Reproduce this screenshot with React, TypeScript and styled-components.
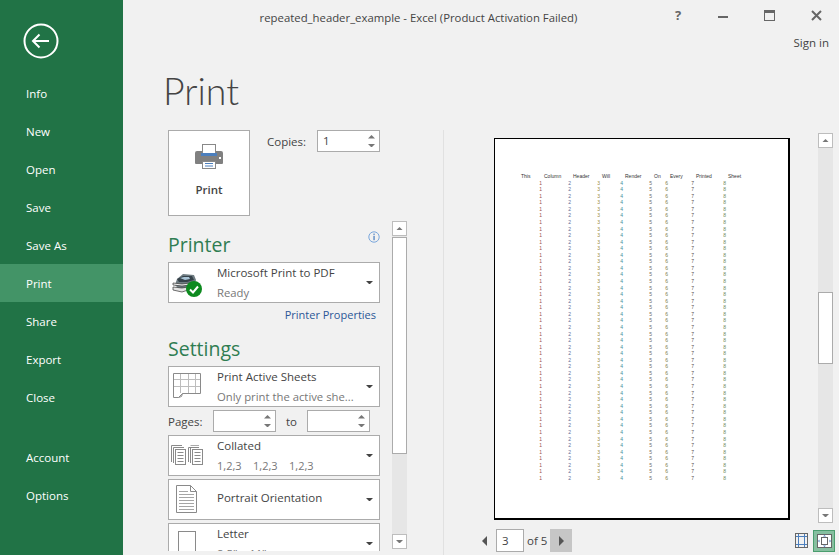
import React from "react";
import styled, { createGlobalStyle } from "styled-components";

const Global = createGlobalStyle`
  html, body {
    margin: 0;
    padding: 0;
    height: 100%;
    overflow: hidden;
    background: #f1f1f1;
  }
  * { box-sizing: border-box; }
`;

const green = "#217346";
const line = "#ababab";

const Window = styled.div`
  width: 839px;
  height: 555px;
  display: flex;
  overflow: hidden;
  background: #f1f1f1;
  color: #444;
  font-family: "Open Sans", "Liberation Sans", sans-serif;
  font-size: 11.5px;
`;

const Sidebar = styled.nav`
  width: 123px;
  flex: none;
  background: ${green};
  color: #fff;
  display: flex;
  flex-direction: column;
`;

const BackButton = styled.div`
  padding: 23px 0 0 23px;
  height: 74px;
`;

const NavItem = styled.div<{ $active?: boolean }>`
  height: 38px;
  line-height: 40px;
  padding-left: 26px;
  background: ${(p) => (p.$active ? "#439467" : "transparent")};
`;

const NavGap = styled.div`
  height: 22px;
`;

const Main = styled.main`
  flex: 1;
  min-width: 0;
  display: flex;
  flex-direction: column;
`;

const TitleBar = styled.header`
  height: 55px;
  flex: none;
  display: flex;
  margin-left: -123px;
  position: relative;
`;

const WindowTitle = styled.div`
  width: 100%;
  text-align: center;
  padding: 9px 2px 0 0;
  line-height: 17px;
  font-size: 11.35px;
`;

const WindowControls = styled.div`
  position: absolute;
  top: 7px;
  right: 0;
  display: flex;
  flex-direction: column;
  align-items: flex-end;
`;

const ControlRow = styled.div`
  display: flex;
  gap: 36px;
  padding-right: 17px;
  height: 16px;
  align-items: center;
`;

const SignIn = styled.div`
  margin-top: 12px;
  padding-right: 10px;
  line-height: 16px;
`;

const HelpMark = styled.span`
  font-weight: 700;
  font-size: 13px;
  color: #666;
  width: 7px;
  line-height: 14px;
`;

const PageTitle = styled.h1`
  margin: 0;
  padding-left: 40px;
  height: 75px;
  font-family: "Lato", sans-serif;
  font-size: 37.5px;
  font-weight: 300;
  line-height: 71px;
  color: #444;
`;

const Body = styled.div`
  flex: 1;
  min-height: 0;
  display: flex;
`;

const Controls = styled.section`
  width: 321px;
  flex: none;
  padding-left: 45px;
  border-right: 1px solid #e1e1e1;
  display: flex;
  gap: 12px;
`;

const ControlColumn = styled.div`
  width: 212px;
  flex: none;
  height: 421px;
  overflow: hidden;
`;

const TopRow = styled.div`
  display: flex;
`;

const PrintButton = styled.button`
  width: 82px;
  height: 86px;
  padding: 13px 0 0;
  background: #fff;
  border: 1px solid ${line};
  font: inherit;
  font-weight: 600;
  line-height: 16px;
  color: #444;
  display: flex;
  flex-direction: column;
  align-items: center;
  gap: 13px;
`;

const CopiesRow = styled.div`
  display: flex;
  align-items: flex-start;
  margin-left: 17px;
`;

const CopiesLabel = styled.label`
  width: 50px;
  line-height: 23px;
`;

const SpinBox = styled.div`
  width: 63px;
  height: 22px;
  background: #fff;
  border: 1px solid ${line};
  display: flex;
  align-items: center;
  justify-content: space-between;
  padding: 0 4px 0 5px;
  line-height: 20px;
`;

const SpinArrows = styled.div`
  display: flex;
  flex-direction: column;
  gap: 5px;
`;

const SectionHead = styled.div<{ $top: number }>`
  display: flex;
  justify-content: space-between;
  align-items: flex-start;
  margin-top: ${(p) => p.$top}px;
`;

const SectionTitle = styled.h2`
  margin: 0;
  font-size: 19.5px;
  font-weight: 400;
  line-height: 28px;
  color: #2f7d52;
`;

const Dropdown = styled.div<{ $top?: number }>`
  height: 41px;
  margin-top: ${(p) => p.$top ?? 0}px;
  background: #fff;
  border: 1px solid ${line};
  display: flex;
  align-items: center;
  flex: none;
`;

const DropIcon = styled.div<{ $left: number; $top: number }>`
  width: 48px;
  flex: none;
  align-self: stretch;
  padding: ${(p) => p.$top}px 0 0 ${(p) => p.$left}px;
`;

const DropText = styled.div`
  flex: 1;
  min-width: 0;
  line-height: 20px;
  white-space: nowrap;
`;

const SingleLine = styled(DropText)`
  padding-bottom: 3px;
`;

const DropSub = styled.div`
  color: #777;
  font-size: 11.3px;
`;

const CollatedSub = styled.div`
  color: #777;
  font-size: 11px;
  display: flex;
  & span {
    width: 36px;
  }
`;

const DropCaret = styled.div`
  width: 13px;
  flex: none;
  display: flex;
  align-items: center;
`;

const PropertiesLink = styled.a`
  display: block;
  text-align: right;
  padding-right: 4px;
  height: 24px;
  line-height: 24px;
  font-size: 11px;
  color: #2b5797;
`;

const PagesRow = styled.div`
  display: flex;
  align-items: center;
  height: 22px;
  margin: 3px 0;
`;

const PagesLabel = styled.span`
  width: 45px;
`;

const ToLabel = styled.span`
  width: 31px;
  text-align: center;
`;

const Scrollbar = styled.div<{ $height: number; $top: number }>`
  width: 15px;
  height: ${(p) => p.$height}px;
  margin-top: ${(p) => p.$top}px;
  background: #e6e6e6;
  flex: none;
  display: flex;
  flex-direction: column;
`;

const ScrollButton = styled.div`
  height: 15px;
  flex: none;
  background: #fff;
  border: 1px solid #bdbdbd;
  display: flex;
  align-items: center;
  justify-content: center;
`;

const ScrollThumb = styled.div<{ $height: number; $before: number }>`
  height: ${(p) => p.$height}px;
  margin-top: ${(p) => p.$before}px;
  background: #fff;
  border: 1px solid ${line};
  flex: none;
`;

const ScrollFill = styled.div`
  flex: 1;
`;

const Preview = styled.section`
  flex: 1;
  min-width: 0;
  display: flex;
  flex-direction: column;
`;

const PreviewTop = styled.div`
  display: flex;
  padding-left: 50px;
  padding-top: 8px;
`;

const Sheet = styled.div`
  width: 296px;
  height: 382px;
  flex: none;
  background: #fff;
  border: 1px solid #000;
  border-right-width: 2px;
  border-bottom-width: 2px;
  padding: 34px 0 0 26px;
  font-family: "Liberation Sans", sans-serif;
  font-size: 5px;
  line-height: 6.57px;
`;

const SheetTable = styled.div`
  display: grid;
  grid-template-columns: 23px 29px 29px 23px 29px 16px 26px 32px 20px;
  grid-auto-rows: 6.57px;
`;

const SheetHead = styled.div`
  color: #333;
  height: 8px;
`;

const SheetCell = styled.div<{ $color: string }>`
  text-align: right;
  padding-right: 2px;
  color: ${(p) => p.$color};
`;

const PreviewScroll = styled.div`
  margin-left: 28px;
  margin-top: -5px;
`;

const PagerBar = styled.div`
  display: flex;
  align-items: center;
  height: 23px;
  margin-top: 6px;
  padding-left: 38px;
`;

const PagerArrow = styled.div<{ $active?: boolean }>`
  width: 22px;
  height: 23px;
  background: ${(p) => (p.$active ? "#c6c6c6" : "transparent")};
  display: flex;
  align-items: center;
  justify-content: center;
`;

const PagerPrev = styled(PagerArrow)`
  width: 14px;
  justify-content: flex-start;
`;

const PageInput = styled.div`
  width: 28px;
  height: 23px;
  background: #fff;
  border: 1px solid ${line};
  padding-left: 5px;
  line-height: 21px;
`;

const PagerText = styled.span`
  margin: 0 3px;
  white-space: nowrap;
`;

const ViewButtons = styled.div`
  margin-left: auto;
  margin-right: 4px;
  display: flex;
  align-items: center;
  gap: 1px;
`;

const ViewToggle = styled.div<{ $active?: boolean }>`
  width: ${(p) => (p.$active ? 22 : 21)}px;
  height: 22px;
  display: flex;
  align-items: center;
  justify-content: center;
  background: ${(p) => (p.$active ? "#86bf9f" : "transparent")};
  border: 1px solid ${(p) => (p.$active ? "#4a9d6e" : "transparent")};
`;

const Icon = styled.svg`
  display: block;
`;

const Tri = ({ dir, size = 3.5, color = "#777" }: { dir: "up" | "down" | "left" | "right"; size?: number; color?: string }) => {
  const s = size * 2;
  const pts = {
    up: `0,${size} ${size},0 ${s},${size}`,
    down: `0,0 ${s},0 ${size},${size}`,
    left: `${size},0 ${size},${s} 0,${size}`,
    right: `0,0 ${size},${size} 0,${s}`,
  }[dir];
  const horizontal = dir === "up" || dir === "down";
  return (
    <Icon width={horizontal ? s : size} height={horizontal ? size : s}>
      <polygon points={pts} fill={color} />
    </Icon>
  );
};

const Spinners = () => (
  <SpinArrows>
    <Tri dir="up" />
    <Tri dir="down" />
  </SpinArrows>
);

const Caret = () => (
  <DropCaret>
    <Tri dir="down" color="#444" />
  </DropCaret>
);

const BackIcon = () => (
  <Icon width="36" height="36" viewBox="0 0 36 36" fill="none" stroke="#fff" strokeWidth="2">
    <circle cx="18" cy="18" r="16.5" />
    <path d="M26 18H10.500M16.500 11.500 10 18l6.500 6.500" />
  </Icon>
);

const PrinterIcon = () => (
  <Icon width="28" height="25" viewBox="0 0 28 25">
    <rect x="7.5" y="0.5" width="13" height="9" fill="#fff" stroke="#888" />
    <path d="M2 7h5v2h14V7h5a2 2 0 0 1 2 2v10a1 1 0 0 1-1 1H1a1 1 0 0 1-1-1V9a2 2 0 0 1 2-2z" fill="#808080" />
    <rect x="6" y="9" width="16" height="3" fill="#4c7fbd" />
    <rect x="7.5" y="17.5" width="13" height="7" fill="#fff" stroke="#888" />
    <path d="M10 19.500h8M10 22h8" stroke="#4c7fbd" />
    <rect x="24" y="13" width="2" height="2" fill="#fff" />
  </Icon>
);

const InfoIcon = () => (
  <Icon width="12" height="12" viewBox="0 0 12 12">
    <circle cx="6" cy="6" r="5.2" fill="none" stroke="#7aa7dc" />
    <rect x="5.4" y="2.6" width="1.3" height="1.3" fill="#4f82c0" />
    <rect x="5.4" y="4.8" width="1.3" height="4.4" fill="#4f82c0" />
  </Icon>
);

const PrinterStatusIcon = () => (
  <Icon width="30" height="23" viewBox="0 0 30 23">
    <path d="M5 5 11 0l11 1 2 5-3 9H7L3 11z" fill="#6f7c82" />
    <path d="M5 5l6-3h9l2 4-7 2H7z" fill="#36424a" />
    <path d="M8 4l4-1h5l1 2-5 1z" fill="#a9c4d6" />
    <path d="M1 9l9 1 8-1v2l-8 1-9-1z" fill="#f0f0f0" stroke="#333" strokeWidth=".7" />
    <path d="M1 13l9 1 6-1v3l-6 2-9-2z" fill="#e4e4e4" stroke="#333" strokeWidth=".7" />
    <circle cx="22" cy="15" r="8" fill="#0d8a1f" />
    <path d="M18 15.500l3 3 5-6" fill="none" stroke="#fff" strokeWidth="2" />
  </Icon>
);

const SheetsIcon = () => (
  <Icon width="28" height="25" viewBox="0 0 28 25" fill="none">
    <path d="M7.500 1v19M15.500 1v19M22.500 1v19M1 6.500h26M1 13.500h26" stroke="#bdbdbd" />
    <path d="M.5.500h27v20h-18l-4 4h-5z" stroke="#8a8a8a" />
    <path d="M9.500 20.500l-1 3-3 1" stroke="#8a8a8a" />
  </Icon>
);

const CollatedIcon = () => (
  <Icon width="32" height="20" viewBox="0 0 32 20" fill="none" stroke="#8a8a8a">
    <path d="M.5 17V.5H11M2.500 18V2.500H13" />
    <rect x="4.500" y="4.500" width="10" height="15" fill="#fff" />
    <path d="M6.500 7.500h6M6.500 10.500h6M6.500 13.500h6M6.500 16.500h6" />
    <path d="M17.500 17V2.500H28M19.500 18V2.500" />
    <path d="M19.500.5H28" stroke="#aaa" />
    <rect x="21.500" y="4.500" width="10" height="15" fill="#fff" />
    <path d="M23.500 7.500h6M23.500 10.500h6M23.500 13.500h6M23.500 16.500h6" />
  </Icon>
);

const PortraitIcon = () => (
  <Icon width="21" height="28" viewBox="0 0 21 28" fill="none" stroke="#8a8a8a">
    <path d="M.5.500h14l6 6v21H.5z" />
    <path d="M14.500.5v6h6" />
    <path d="M3 6.500h9M3 9.500h15M3 12.500h15M3 15.500h15M3 18.500h15M3 21.500h15M3 24.500h15" stroke="#a5a5a5" />
  </Icon>
);

const LetterIcon = () => (
  <Icon width="18" height="24" viewBox="0 0 18 24" fill="none" stroke="#8a8a8a">
    <rect x=".5" y=".5" width="17" height="23" />
  </Icon>
);

const GridViewIcon = () => (
  <Icon width="13" height="15" viewBox="0 0 13 15" fill="none">
    <rect x=".5" y=".5" width="12" height="14" stroke="#666" />
    <path d="M3.500 1v13M9.500 1v13M1 3.500h11M1 11.500h11" stroke="#4c7fbd" />
  </Icon>
);

const FitViewIcon = () => (
  <Icon width="15" height="14" viewBox="0 0 15 14" fill="none">
    <rect x=".5" y=".5" width="14" height="13" fill="#fff" stroke="#666" />
    <rect x="4.500" y="3.500" width="6" height="7" stroke="#666" />
    <path d="M6 2.500h3L7.500 1zM6 11.500h3L7.500 13zM2.500 5.500v3L1 7zM12.500 5.500v3L14 7z" fill="#4c7fbd" />
  </Icon>
);

const CloseIcon = () => (
  <Icon width="11" height="11" viewBox="0 0 11 11">
    <path d="M1 1l9 9M10 1l-9 9" stroke="#666" strokeWidth="2" />
  </Icon>
);

const RestoreIcon = () => (
  <Icon width="11" height="11" viewBox="0 0 11 11" fill="none">
    <rect x=".5" y=".5" width="10" height="10" stroke="#666" />
    <rect x="0" y="0" width="11" height="3" fill="#666" />
  </Icon>
);

const MinimizeIcon = () => (
  <Icon width="10" height="11" viewBox="0 0 10 11">
    <rect x="0" y="6" width="10" height="2" fill="#666" />
  </Icon>
);

const navTop = ["Info", "New", "Open", "Save", "Save As", "Print", "Share", "Export", "Close"];
const navBottom = ["Account", "Options"];
const headers = ["This", "Column", "Header", "Will", "Render", "On", "Every", "Printed", "Sheet"];
const numberColors = ["#9c4f4a", "#5f6c96", "#96883f", "#46909a", "#6f6e68", "#7d7d4c", "#55534a", "#6c8a58"];
const rows = Array.from({ length: 46 }, (_, i) => i);

export default function App() {
  return (
    <Window>
      <Global />
      <Sidebar>
        <BackButton>
          <BackIcon />
        </BackButton>
        {navTop.map((n) => (
          <NavItem key={n} $active={n === "Print"}>
            {n}
          </NavItem>
        ))}
        <NavGap />
        {navBottom.map((n) => (
          <NavItem key={n}>{n}</NavItem>
        ))}
      </Sidebar>
      <Main>
        <TitleBar>
          <WindowTitle>repeated_header_example - Excel (Product Activation Failed)</WindowTitle>
          <WindowControls>
            <ControlRow>
              <HelpMark>?</HelpMark>
              <MinimizeIcon />
              <RestoreIcon />
              <CloseIcon />
            </ControlRow>
            <SignIn>Sign in</SignIn>
          </WindowControls>
        </TitleBar>
        <PageTitle>Print</PageTitle>
        <Body>
          <Controls>
            <ControlColumn>
              <TopRow>
                <PrintButton>
                  <PrinterIcon />
                  Print
                </PrintButton>
                <CopiesRow>
                  <CopiesLabel>Copies:</CopiesLabel>
                  <SpinBox>
                    1
                    <Spinners />
                  </SpinBox>
                </CopiesRow>
              </TopRow>
              <SectionHead $top={15}>
                <SectionTitle>Printer</SectionTitle>
                <InfoIcon />
              </SectionHead>
              <Dropdown $top={3}>
                <DropIcon $left={3} $top={11}>
                  <PrinterStatusIcon />
                </DropIcon>
                <DropText>
                  Microsoft Print to PDF
                  <DropSub>Ready</DropSub>
                </DropText>
                <Caret />
              </Dropdown>
              <PropertiesLink>Printer Properties</PropertiesLink>
              <SectionHead $top={8}>
                <SectionTitle>Settings</SectionTitle>
              </SectionHead>
              <Dropdown $top={3}>
                <DropIcon $left={4} $top={6}>
                  <SheetsIcon />
                </DropIcon>
                <DropText>
                  Print Active Sheets
                  <DropSub>Only print the active she...</DropSub>
                </DropText>
                <Caret />
              </Dropdown>
              <PagesRow>
                <PagesLabel>Pages:</PagesLabel>
                <SpinBox>
                  <span />
                  <Spinners />
                </SpinBox>
                <ToLabel>to</ToLabel>
                <SpinBox>
                  <span />
                  <Spinners />
                </SpinBox>
              </PagesRow>
              <Dropdown>
                <DropIcon $left={2} $top={9}>
                  <CollatedIcon />
                </DropIcon>
                <DropText>
                  Collated
                  <CollatedSub>
                    <span>1,2,3</span>
                    <span>1,2,3</span>
                    <span>1,2,3</span>
                  </CollatedSub>
                </DropText>
                <Caret />
              </Dropdown>
              <Dropdown $top={3}>
                <DropIcon $left={7} $top={5}>
                  <PortraitIcon />
                </DropIcon>
                <SingleLine>Portrait Orientation</SingleLine>
                <Caret />
              </Dropdown>
              <Dropdown $top={3}>
                <DropIcon $left={9} $top={7}>
                  <LetterIcon />
                </DropIcon>
                <DropText>
                  Letter
                  <DropSub>8.5" x 11"</DropSub>
                </DropText>
                <Caret />
              </Dropdown>
            </ControlColumn>
            <Scrollbar $height={328} $top={91}>
              <ScrollButton>
                <Tri dir="up" />
              </ScrollButton>
              <ScrollThumb $height={217} $before={1} />
              <ScrollFill />
              <ScrollButton>
                <Tri dir="down" />
              </ScrollButton>
            </Scrollbar>
          </Controls>
          <Preview>
            <PreviewTop>
              <Sheet>
                <SheetTable>
                  {headers.map((h) => (
                    <SheetHead key={h}>{h}</SheetHead>
                  ))}
                  {rows.map((r) =>
                    headers.map((h, i) =>
                      i < 8 ? (
                        <SheetCell key={`${r}-${h}`} $color={numberColors[i]}>
                          {i + 1}
                        </SheetCell>
                      ) : (
                        <span key={`${r}-${h}`} />
                      )
                    )
                  )}
                </SheetTable>
              </Sheet>
              <PreviewScroll>
                <Scrollbar $height={390} $top={0}>
                  <ScrollButton>
                    <Tri dir="up" />
                  </ScrollButton>
                  <ScrollThumb $height={72} $before={144} />
                  <ScrollFill />
                  <ScrollButton>
                    <Tri dir="down" />
                  </ScrollButton>
                </Scrollbar>
              </PreviewScroll>
            </PreviewTop>
            <PagerBar>
              <PagerPrev>
                <Tri dir="left" size={5} color="#555" />
              </PagerPrev>
              <PageInput>3</PageInput>
              <PagerText>of 5</PagerText>
              <PagerArrow $active>
                <Tri dir="right" size={5} color="#555" />
              </PagerArrow>
              <ViewButtons>
                <ViewToggle>
                  <GridViewIcon />
                </ViewToggle>
                <ViewToggle $active>
                  <FitViewIcon />
                </ViewToggle>
              </ViewButtons>
            </PagerBar>
          </Preview>
        </Body>
      </Main>
    </Window>
  );
}
